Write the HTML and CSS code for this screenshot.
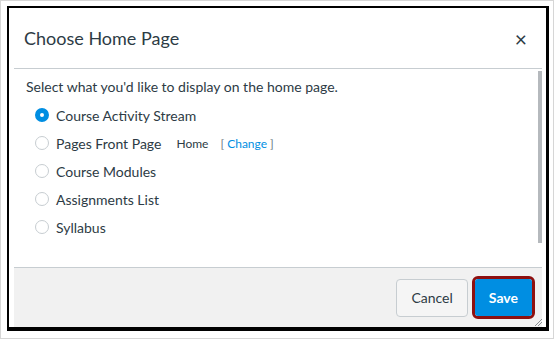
FILE: index.html
```html
<!DOCTYPE html>
<html lang="en">
<head>
    <title>Choose Home Page</title>
    <meta charset="UTF-8">
    <link rel="stylesheet" href="styles.css">
</head>
<body>
    <div class="shot">
        <div class="frame">
            <div class="dialog">
                <div class="dialog-header">
                    <h2>Choose Home Page</h2>
                    <span class="close">&times;</span>
                </div>
                <div class="dialog-body">
                    <p class="intro">Select what you'd like to display on the home page.</p>
                    <label class="option"><span class="radio checked"></span>Course Activity Stream</label>
                    <label class="option"><span class="radio"></span>Pages Front Page
                        <span class="front-page">Home</span>
                        <span class="change">[ <a href="#">Change</a> ]</span>
                    </label>
                    <label class="option"><span class="radio"></span>Course Modules</label>
                    <label class="option"><span class="radio"></span>Assignments List</label>
                    <label class="option"><span class="radio"></span>Syllabus</label>
                    <div class="scrollbar"></div>
                </div>
                <div class="dialog-footer">
                    <button class="btn">Cancel</button>
                    <span class="highlight"><button class="btn btn-primary">Save</button></span>
                    <svg class="resize" width="8" height="8" viewBox="0 0 8 8">
                        <path d="M1 8 L8 1 M4 8 L8 4" stroke="#8a8f93" stroke-width="1"/>
                    </svg>
                </div>
            </div>
        </div>
    </div>
</body>
</html>
```

FILE: styles.css
```css
body {
    margin: 0;
    background-color: #fff;
    font-family: Lato, "Liberation Sans", sans-serif;
    color: #2d3b45;
}
.shot {
    box-sizing: border-box;
    width: 554px;
    height: 339px;
    border: 1px solid #d6d6d6;
    padding: 5px 4px 4px 6px;
}
.frame {
    border-style: solid;
    border-color: #000;
    border-width: 2px 3px 4px 2px;
    padding: 0 4px 0 5px;
}
.dialog {
    background-color: #fff;
}
.dialog-header {
    display: flex;
    align-items: center;
    justify-content: space-between;
    height: 60px;
    padding: 0 15px 0 10px;
    border-bottom: 1px solid #c7cdd1;
}
.dialog-header h2 {
    margin: 0;
    font-size: 18px;
    font-weight: normal;
}
.close {
    font-size: 21px;
    line-height: 1;
    color: #2d3b45;
}
.dialog-body {
    position: relative;
    height: 198px;
    padding: 4px 0 0 12px;
    box-sizing: border-box;
}
.intro {
    margin: 0;
    font-size: 14px;
    line-height: 28px;
}
.option {
    display: flex;
    align-items: center;
    height: 28px;
    font-size: 14px;
}
.radio {
    box-sizing: border-box;
    width: 14px;
    height: 14px;
    margin: 0 7px 0 9px;
    border: 1px solid #c7cdd1;
    border-radius: 50%;
    background-color: #fff;
}
.radio.checked {
    border: 5px solid #008ee2;
}
.front-page {
    margin-left: 15px;
    font-size: 12px;
}
.change {
    margin-left: 12px;
    font-size: 12px;
    color: #6b7780;
}
.change a {
    color: #008ee2;
    text-decoration: none;
}
.scrollbar {
    position: absolute;
    top: 2px;
    right: 0;
    width: 4px;
    height: 172px;
    background-color: #b5b9bd;
}
.dialog-footer {
    position: relative;
    display: flex;
    align-items: center;
    justify-content: flex-end;
    gap: 4px;
    height: 59px;
    padding-right: 7px;
    border-top: 1px solid #c7cdd1;
    background-color: #f1f1f1;
}
.btn {
    height: 38px;
    padding: 0 14px;
    border: 1px solid #c7cdd1;
    border-radius: 4px;
    background-color: #f5f5f5;
    color: #2d3b45;
    font-family: Lato, "Liberation Sans", sans-serif;
    font-size: 14px;
}
.highlight {
    display: flex;
    border: 3px solid #8e1010;
    border-radius: 6px;
}
.btn-primary {
    height: 37px;
    padding: 0 14px;
    border: none;
    border-radius: 3px;
    background-color: #008ee2;
    color: #fff;
    font-weight: bold;
}
.resize {
    position: absolute;
    right: 0;
    bottom: 1px;
}
```
